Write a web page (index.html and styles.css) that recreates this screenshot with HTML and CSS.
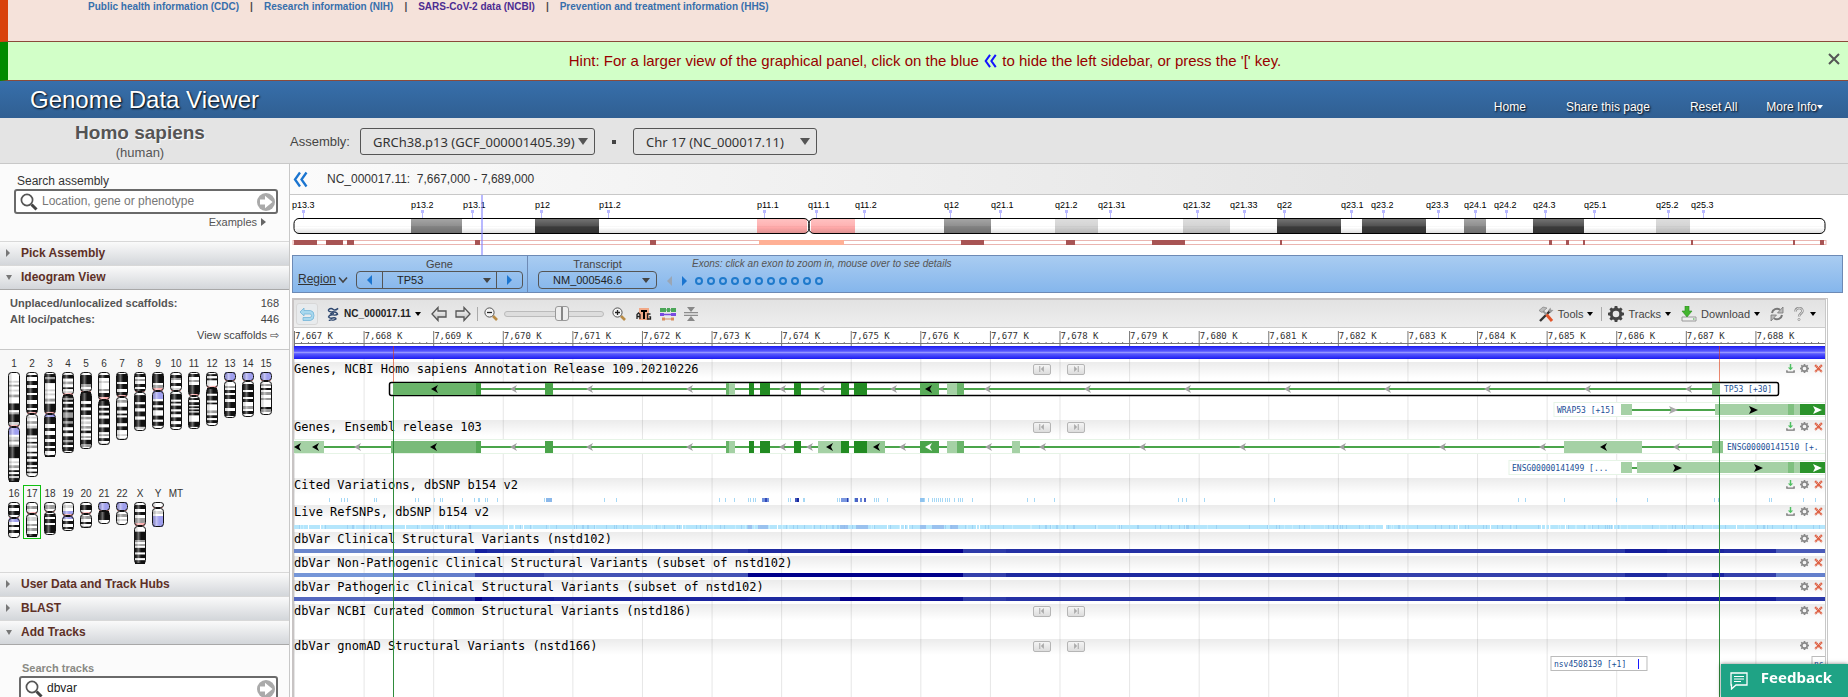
FILE: index.html
```html
<!DOCTYPE html>
<html lang="en">
<head>
<meta charset="utf-8">
<title>Genome Data Viewer</title>
<link rel="stylesheet" href="styles.css">
</head>
<body>
<svg class="defs" aria-hidden="true">
  <defs>
    <linearGradient id="shade" x1="0" x2="0" y1="0" y2="1"><stop offset="0" stop-color="#fff" stop-opacity=".3"/><stop offset=".5" stop-color="#fff" stop-opacity=".12"/><stop offset=".6" stop-color="#000" stop-opacity="0"/><stop offset="1" stop-color="#000" stop-opacity=".14"/></linearGradient>
    <linearGradient id="gloss" x1="0" x2="1" y1="0" y2="0"><stop offset="0" stop-color="#000" stop-opacity=".1"/><stop offset=".35" stop-color="#fff" stop-opacity=".4"/><stop offset=".6" stop-color="#fff" stop-opacity="0"/></linearGradient>
    <linearGradient id="metal" x1="0" x2="0" y1="0" y2="1"><stop offset="0" stop-color="#fff"/><stop offset="1" stop-color="#bbb"/></linearGradient>
    <symbol id="i-search" viewBox="0 0 18 18"><circle cx="7" cy="7" r="5.6" fill="#fff" stroke="#555" stroke-width="1.7"/><path d="M11.5 11.5l5 5" stroke="#444" stroke-width="3"/></symbol>
    <symbol id="i-go" viewBox="0 0 18 18"><circle cx="9" cy="9" r="9" fill="#aaa"/><path d="M3 6.500h5V2.800L15.500 9 8 15.200v-3.700H3z" fill="#fff"/></symbol>
    <symbol id="i-left2" viewBox="0 0 15 16"><path d="M7 1L2 8l5 7M13.500 1l-5 7 5 7" fill="none" stroke="currentColor" stroke-width="2.300"/></symbol>
    <symbol id="i-close" viewBox="0 0 12 12"><path d="M1 1l10 10M11 1L1 11" stroke="#555" stroke-width="2"/></symbol>
    <symbol id="i-gear" viewBox="0 0 16 16"><path d="M6.700 0h2.600l.4 2 1.400.6L12.800 1.400l1.800 1.800-1.200 1.700.6 1.400 2 .4v2.600l-2 .4-.6 1.400 1.200 1.700-1.800 1.800-1.700-1.200-1.400.6-.4 2H6.700l-.4-2-1.400-.6-1.700 1.200-1.800-1.800 1.200-1.700-.6-1.400-2-.4V6.700l2-.4.6-1.400L1.400 3.200l1.800-1.800 1.700 1.200L6.300 2zM8 4.700a3.300 3.300 0 100 6.600 3.300 3.300 0 000-6.600z" fill="currentColor" fill-rule="evenodd"/></symbol>
    <symbol id="i-save" viewBox="0 0 10 10"><path d="M1 7v2h8V7" fill="none" stroke="#777" stroke-width="1.500"/><path d="M4.200 0h1.600v4H8L5 7 2 4h2.200z" fill="#4fbf62"/></symbol>
    <symbol id="i-x" viewBox="0 0 8 8"><path d="M1 1l6 6M7 1L1 7" stroke="#dd5a3c" stroke-width="2" stroke-dasharray="1.300 .3"/></symbol>
    <symbol id="i-prev" viewBox="0 0 8 8"><path d="M1 0v8" stroke="#aaa" stroke-width="1.400"/><path d="M6.500 0v8L2.500 4z" fill="#aaa"/></symbol>
    <symbol id="i-next" viewBox="0 0 8 8"><path d="M7 0v8" stroke="#aaa" stroke-width="1.400"/><path d="M1.500 0v8l4-4z" fill="#aaa"/></symbol>
    <symbol id="i-undo" viewBox="0 0 16 16"><path d="M5 2L1 6l4 4V8h6q1.500 0 1.500 1.700T11 11.500H4v3h7.500q3.500-.5 3.500-5T11.500 4.500H5z" fill="#a8d8ee" stroke="#73b5d8" stroke-width=".8"/></symbol>
    <symbol id="i-dna" viewBox="0 0 14 15"><path d="M2 3q3-2.500 5-.5t5.500-1M2 3q0 2.500 4 2.200t6 2M12.300 7.200q-1.500 2-5 1.300T2 10.500M4 7.500q2-1.500 4-.5M2 10.500q1 2 4.500 1.300t4 .9M10.500 12.700q-2 1.800-4 1.300t-4 .5" fill="none" stroke="#2d466e" stroke-width="1.500"/></symbol>
    <symbol id="i-back" viewBox="0 0 16 16"><path d="M1 8l6-6.500V5h8v6H7v3.500z" fill="url(#metal)" stroke="#555" stroke-width="1.300"/></symbol>
    <symbol id="i-fwd" viewBox="0 0 16 16"><path d="M15 8L9 1.500V5H1v6h8v3.500z" fill="url(#metal)" stroke="#555" stroke-width="1.300"/></symbol>
    <symbol id="i-out" viewBox="0 0 14 14"><path d="M9 9l4 4" stroke="#b98b45" stroke-width="2.600"/><circle cx="5.500" cy="5.500" r="4.600" fill="#f4f4f4" stroke="#555"/><path d="M3 5.500h5" stroke="#222" stroke-width="1.300"/></symbol>
    <symbol id="i-in" viewBox="0 0 14 14"><path d="M9 9l4 4" stroke="#b98b45" stroke-width="2.600"/><circle cx="5.500" cy="5.500" r="4.600" fill="#f4f4f4" stroke="#555"/><path d="M3 5.500h5M5.500 3v5" stroke="#222" stroke-width="1.300"/></symbol>
    <symbol id="i-atg" viewBox="0 0 16 14"><path d="M3 1h10v12H3z" fill="#f2a987"/><path d="M1 12V7.500L2.500 6 4 7.500V12M1 9.500h3M14.500 7h-3v5h3V9.800h-1.300" fill="none" stroke="#222" stroke-width="1.300"/><path d="M5 4h6M8 4v8" stroke="#000" stroke-width="2"/></symbol>
    <symbol id="i-tracks" viewBox="0 0 16 14"><path d="M0 3h16" stroke="#4aa657" stroke-width="1"/><path d="M0 1h6v4H0zM7 1h3v4H7zM11 1h5v4h-5z" fill="#4aa657"/><path d="M1 7.500h14" stroke="#7a4be0" stroke-width="1.500"/><path d="M0 6h4v3H0zM11 6h5v3h-5z" fill="#7a4be0"/><path d="M3 12h10" stroke="#d98b5c"/><path d="M2 10.500h3v3H2zM11 10.500h3v3h-3z" fill="#d98b5c"/></symbol>
    <symbol id="i-fit" viewBox="0 0 14 14"><path d="M0 5.700h14M0 8.300h14" stroke="#777"/><path d="M3 0h8L7 5zM3 14h8L7 9z" fill="#888"/></symbol>
    <symbol id="i-tools" viewBox="0 0 16 16"><path d="M2 15L12 5" stroke="#333" stroke-width="2.400"/><path d="M10 4.500l2.500-3 .5 2.200 2.500.3-3 3z" fill="#999"/><path d="M4 4l5 5" stroke="#999" stroke-width="1.800"/><path d="M1 4.500L5 1l4 1-5 4.500z" fill="#bbb" stroke="#777" stroke-width=".6"/><path d="M8.500 8.500L14 15" stroke="#e2562b" stroke-width="3"/></symbol>
    <symbol id="i-dl" viewBox="0 0 16 16"><path d="M1 11h14v4H1z" fill="#eee" stroke="#999"/><path d="M12 13h1.500" stroke="#3a3"/><path d="M4 0h4v5h3L6 11 1 5h3z" fill="#43b52f" stroke="#2c8b1f" stroke-width=".6"/></symbol>
    <symbol id="i-refresh" viewBox="0 0 14 14"><path d="M2 6a5 5 0 018-3.200M12 8a5 5 0 01-8 3.200" fill="none" stroke="#777" stroke-width="2"/><path d="M13 0v6H7.500zM1 14V8h5.500z" fill="#bbb" stroke="#777" stroke-width=".8"/></symbol>
    <symbol id="i-help" viewBox="0 0 9 14"><path d="M1 4.500C1 0 8 0 8 4c0 2.500-3.500 2.500-3.500 5.500" fill="none" stroke="#888" stroke-width="2.400"/><path d="M1 4.500C1 0 8 0 8 4c0 2.500-3.500 2.500-3.500 5.500" fill="none" stroke="#f4f4f4" stroke-width=".9"/><circle cx="4.500" cy="12.500" r="1.100" fill="#f4f4f4" stroke="#888" stroke-width=".7"/></symbol>
    <symbol id="i-chat" viewBox="0 0 18 18"><path d="M1 1h16v12H6l-4.500 4V13H1z" fill="none" stroke="#fff" stroke-width="1.300"/><path d="M4 4.500h10M4 7h10M4 9.500h7" stroke="#fff"/></symbol>
  </defs>
</svg>

<div class="alert">
  <a href="#">Public health information (CDC)</a><span>|</span><a href="#">Research information (NIH)</a><span>|</span><a class="visited" href="#">SARS-CoV-2 data (NCBI)</a><span>|</span><a href="#">Prevention and treatment information (HHS)</a>
</div>
<div class="hint">
  <p>Hint: For a larger view of the graphical panel, click on the blue <svg><use href="#i-left2"/></svg> to hide the left sidebar, or press the '[' key.</p>
  <button class="plain close" aria-label="Close"><svg><use href="#i-close"/></svg></button>
</div>
<header class="title">
  <h1>Genome Data Viewer</h1>
  <nav><a href="#">Home</a><a href="#">Share this page</a><a href="#">Reset All</a><a class="more" href="#">More Info<i class="caret"></i></a></nav>
</header>
<div class="organism">
  <div class="species"><h2>Homo sapiens</h2><p>(human)</p></div>
  <label for="assembly">Assembly:</label>
  <span class="pick wide"><select id="assembly"><option>GRCh38.p13 (GCF_000001405.39)</option></select></span>
  <span class="dot"></span>
  <span class="pick"><select aria-label="Chromosome"><option>Chr 17 (NC_000017.11)</option></select></span>
</div>

<div class="work">
  <aside>
    <div class="find">
      <label for="q">Search assembly</label>
      <div class="box"><svg><use href="#i-search"/></svg><input id="q" type="text" placeholder="Location, gene or phenotype"><button class="plain" aria-label="Go"><svg><use href="#i-go"/></svg></button></div>
      <a class="examples" href="#">Examples<i></i></a>
    </div>
    <button class="fold">Pick Assembly</button>
    <button class="fold open">Ideogram View</button>
    <div class="counts">
      <dl><dt>Unplaced/unlocalized scaffolds:</dt><dd>168</dd><dt>Alt loci/patches:</dt><dd>446</dd></dl>
      <a href="#">View scaffolds ⇨</a>
    </div>
    <div class="karyo"><div class="chroms" id="row1"></div><div class="chroms" id="row2"></div></div>
    <button class="fold">User Data and Track Hubs</button>
    <button class="fold">BLAST</button>
    <button class="fold open">Add Tracks</button>
    <div class="find tracksearch">
      <label for="t">Search tracks</label>
      <div class="box"><svg><use href="#i-search"/></svg><input id="t" type="text" value="dbvar"><button class="plain" aria-label="Go"><svg><use href="#i-go"/></svg></button></div>
    </div>
  </aside>

  <main>
    <div class="location"><button class="plain" aria-label="Hide sidebar"><svg><use href="#i-left2"/></svg></button><span>NC_000017.11:&nbsp; 7,667,000 - 7,689,000</span></div>
    <svg class="ideogram" id="ideogram"></svg>

    <div class="region">
      <a class="regionlink" href="#">Region</a><svg class="chev" viewBox="0 0 10 8"><path d="M1 1.500l4 4.500 4-4.500" fill="none" stroke="#444" stroke-width="1.600"/></svg>
      <div class="group gene">
        <label for="gene">Gene</label>
        <div class="combo"><button class="plain" aria-label="Previous gene"><i class="tri back"></i></button><select id="gene"><option>TP53</option></select><button class="plain" aria-label="Next gene"><i class="tri"></i></button></div>
      </div>
      <div class="group transcript">
        <label for="tr">Transcript</label>
        <div class="combo"><select id="tr"><option>NM_000546.6</option></select></div>
      </div>
      <div class="exons">
        <p>Exons: click an exon to zoom in, mouse over to see details</p>
        <div id="exons"><i class="tri back off"></i><i class="tri"></i></div>
      </div>
    </div>

    <section class="viewer">
      <div class="toolbar">
        <button class="plain undo" aria-label="Undo"><svg class="s16"><use href="#i-undo"/></svg></button>
        <button class="plain seq"><svg class="s14"><use href="#i-dna"/></svg>NC_000017.11<i class="caret"></i></button>
        <button class="plain" aria-label="Pan left"><svg class="s16"><use href="#i-back"/></svg></button>
        <button class="plain" aria-label="Pan right"><svg class="s16"><use href="#i-fwd"/></svg></button>
        <span class="sep"></span>
        <button class="plain" aria-label="Zoom out"><svg class="s14"><use href="#i-out"/></svg></button>
        <input type="range" aria-label="Zoom" min="0" max="100" value="60">
        <button class="plain" aria-label="Zoom in"><svg class="s14"><use href="#i-in"/></svg></button>
        <button class="plain" aria-label="Sequence"><svg class="s16"><use href="#i-atg"/></svg></button>
        <button class="plain" aria-label="Track layout"><svg class="s16"><use href="#i-tracks"/></svg></button>
        <button class="plain" aria-label="Fit"><svg class="s14"><use href="#i-fit"/></svg></button>
        <span class="grow"></span>
        <button class="plain menu"><svg class="s16"><use href="#i-tools"/></svg>Tools<i class="caret"></i></button>
        <span class="sep"></span>
        <button class="plain menu"><svg class="s16 dark"><use href="#i-gear"/></svg>Tracks<i class="caret"></i></button>
        <button class="plain menu"><svg class="s16"><use href="#i-dl"/></svg>Download<i class="caret"></i></button>
        <button class="plain" aria-label="Refresh"><svg class="s14"><use href="#i-refresh"/></svg></button>
        <button class="plain menu" aria-label="Help"><svg class="s14"><use href="#i-help"/></svg><i class="caret"></i></button>
      </div>
      <svg class="ruler" id="ruler"></svg>
      <div class="tracks" id="tracks">
        <svg class="under" id="grid"></svg>
        <div class="sequence"></div>
      </div>
    </section>
  </main>
</div>
<button class="feedback"><svg><use href="#i-chat"/></svg>Feedback</button>
<script src="app.js"></script>
</body>
</html>
```
FILE: styles.css
```css
* { box-sizing: border-box; }
body { margin: 0; height: 100vh; overflow: hidden; display: flex; flex-direction: column; background: #fff; color: #333; font: 12px/16px "Liberation Sans", Arial, sans-serif; }
h1, h2, p, dl, dd { margin: 0; }
a { color: inherit; text-decoration: none; }
svg { display: block; flex: none; }
.defs { position: absolute; width: 0; height: 0; }
.plain { appearance: none; border: 0; padding: 0; margin: 0; background: none; font: inherit; color: inherit; display: flex; align-items: center; }
.caret { width: 0; height: 0; border: 3px solid transparent; border-top: 4px solid #000; border-bottom: 0; }
.s16 { width: 16px; height: 16px; }
.s14 { width: 14px; height: 14px; }

.alert { height: 42px; flex: none; padding-left: 80px; border-left: 8px solid #d9420b; border-bottom: 1px solid #8b4a3a; background: #f5e2da; font-size: 10px; line-height: 13px; font-weight: bold; color: #4a4a4a; display: flex; }
.alert a { color: #376fac; }
.alert .visited { color: #4c2c92; }
.alert span { margin: 0 11px; }
.hint { height: 39px; flex: none; display: flex; align-items: center; border-left: 8px solid #008a00; border-bottom: 1px solid #8b4a3a; background: #d2ffc8; color: #990000; font-size: 15px; }
.hint p { flex: 1; text-align: center; padding-left: 14px; }
.hint p svg { display: inline-block; width: 15px; height: 14px; color: #1414ff; vertical-align: -2px; }
.close { margin: 0 8px 4px 0; }
.close svg { width: 12px; height: 12px; }

.title { height: 37px; flex: none; display: flex; justify-content: space-between; align-items: center; padding: 0 25px 0 30px; background: linear-gradient(#376fab, #305f92); color: #fff; text-shadow: 1px 1px 2px #000; }
.title h1 { font-size: 24px; line-height: 28px; font-weight: normal; }
.title nav { display: flex; padding-top: 14px; }
.title nav a { margin-left: 40px; }
.title nav .more { margin-left: 29px; display: flex; align-items: center; }
.title .caret { border-top-color: #fff; }

.organism { height: 46px; flex: none; display: flex; align-items: center; border-bottom: 1px solid #c8c8c8; background: #e4e4e4; padding-top: 2px; font-size: 13px; color: #444; }
.species { width: 290px; padding-right: 10px; text-align: center; color: #555; }
.species h2 { font-size: 19px; line-height: 23px; text-shadow: 1px 1px 1px #fff; }
.species p { line-height: 18px; }
.organism label { margin-right: 10px; }
.pick { position: relative; width: 184px; }
.pick.wide { width: 235px; }
.pick select { appearance: none; display: block; width: 100%; height: 27px; padding: 0 12px; border: 1px solid #555; border-radius: 3px; background: #e4e4e4; color: #333; font: 13px "Noto Sans", sans-serif; }
.pick::after { content: ""; position: absolute; right: 7px; top: 10px; border: 5px solid transparent; border-top: 7px solid #555; border-bottom: 0; }
.dot { width: 4px; height: 4px; margin: 0 17px; background: #444; }

.work { flex: 1; min-height: 0; display: grid; grid-template-columns: 290px 1fr; overflow: hidden; }
aside { min-width: 0; border-right: 1px solid #c8c8c8; background: #fbfbfb; overflow: hidden; }
.find { height: 77px; padding: 9px 11px 0 14px; display: flex; flex-direction: column; }
.find label { padding-left: 3px; }
.box { height: 25px; flex: none; display: flex; align-items: center; padding: 0 1px 0 4px; border: 2px solid #6a6a6a; border-radius: 3px; background: #fff; }
.box svg { width: 18px; height: 18px; }
.box input { flex: 1; min-width: 0; border: 0; outline: 0; padding: 0 4px 2px; background: none; font: 12px "Liberation Sans", sans-serif; color: #222; }
.box input::placeholder { color: #777; }
.examples { align-self: flex-end; display: flex; align-items: center; margin-right: 12px; font-size: 11px; color: #555; }
.examples i { margin-left: 4px; border: 4px solid transparent; border-left: 5px solid #666; border-right: 0; }
.fold { display: flex; align-items: center; width: 100%; height: 24px; padding: 0 6px 1px; border: 0; border-top: 1px solid #d8d8d8; background: linear-gradient(#fafafa, #d3d6da); font: bold 12px "Liberation Sans", sans-serif; color: #5e3026; }
.fold::before { content: ""; margin-right: 11px; border: 4px solid transparent; border-left: 4px solid #777; border-right: 0; }
.fold.open::before { margin-right: 9px; border: 3px solid transparent; border-top: 5px solid #777; border-bottom: 0; }
.fold.open { height: 25px; border-bottom: 1px solid #a8a8a8; }
.counts { height: 60px; padding: 5px 10px; border-bottom: 1px solid #c8c8c8; font-size: 11px; color: #444; }
.counts dl { display: grid; grid-template-columns: 1fr auto; }
.counts dt { font-weight: bold; color: #555; }
.counts dd { text-align: right; }
.counts a { display: block; text-align: right; }
.karyo { height: 222px; padding: 5px 0 0 5px; background: #f8f8f8; }
.chroms { display: flex; height: 130px; }
.chrom { width: 18px; flex: none; display: flex; flex-direction: column; align-items: center; font-size: 10px; line-height: 16px; white-space: nowrap; border: 1px solid transparent; }
.chrom.on { height: 54px; border-color: #10c010; }
.tracksearch { padding: 15px 11px 0 19px; }
.tracksearch label { font-size: 11px; font-weight: bold; color: #8a8a84; }

main { min-width: 0; overflow: hidden; display: flex; flex-direction: column; }
.location { height: 31px; flex: none; display: flex; align-items: center; gap: 19px; padding: 0 3px; border-bottom: 1px solid #c8c8c8; background: linear-gradient(90deg, #fbfbfb, #e4e4e4 70%); }
.location svg { width: 15px; height: 17px; color: #1b75d0; }
.ideogram { height: 60px; margin: 0 23px 0 4px; width: calc(100% - 27px); overflow: visible; font: 9px "Liberation Sans", sans-serif; }
.region { height: 38px; flex: none; margin: 0 5px 0 2px; display: flex; border: 1px solid #6d8ab5; background: linear-gradient(#a9ccf1, #85b6ec); color: #444; font-size: 11px; }
.regionlink { padding: 15px 0 0 5px; font-size: 12px; text-decoration: underline; color: #333; }
.chev { width: 10px; height: 8px; margin: 20px 8px 0 2px; }
.group { display: flex; flex-direction: column; align-items: center; border-right: 1px solid #6d8ab5; padding: 2px 4px 0 0; }
.group label { line-height: 13px; }
.transcript { padding: 2px 10px 0; border: 0; }
.combo { position: relative; display: flex; height: 18px; border: 1px solid #555; border-radius: 4px; }
.combo button { width: 25px; justify-content: center; }
.combo select { appearance: none; width: 115px; padding: 0 14px; border: 0; border-left: 1px solid #555; border-right: 1px solid #555; background: none; font: 11px "Liberation Sans", sans-serif; color: #222; }
.transcript select { width: 117px; border: 0; }
.combo::after { content: ""; position: absolute; right: 31px; top: 6px; border: 4px solid transparent; border-top: 5px solid #444; border-bottom: 0; pointer-events: none; }
.transcript .combo::after { right: 6px; }
.tri { border: 5px solid transparent; border-left: 5px solid #1b75d0; border-right: 0; }
.tri.back { border-left: 0; border-right: 5px solid #1b75d0; }
.tri.off { border-right-color: #9aa6b5; }
.exons p { padding: 1px 0 0 25px; font-size: 10px; line-height: 14px; font-style: italic; color: #555; }
.exons div { display: flex; align-items: center; padding-top: 5px; }
.exons .tri.off { margin-right: 10px; }
.exons button { width: 8px; height: 8px; margin-left: 4px; padding: 0; border: 2px solid #1f7acc; border-radius: 4px; background: none; }
.exons .tri + button { margin-left: 8px; }

.viewer { flex: 1; min-height: 0; margin: 5px 20px 0 2px; border: 2px solid #c8c4c4; border-bottom: 0; border-right: 3px double #c8c8c8; display: flex; flex-direction: column; }
.toolbar { height: 28px; flex: none; display: flex; align-items: center; gap: 8px; padding: 0 7px 0 2px; border-bottom: 1px solid #ccc; background: linear-gradient(#e2e2e2, #eee); font-size: 11px; color: #444; }
.toolbar .undo { padding: 2px; border: 1px solid #d8d8d8; border-radius: 3px; background: #e8ebed; }
.toolbar .seq { gap: 4px; margin-right: 2px; font-size: 10px; font-weight: bold; color: #222; }
.toolbar .menu { gap: 4px; margin-right: 2px; }
.sep { width: 1px; height: 14px; margin: 0 -2px; background: #aaa; }
.grow { flex: 1; }
.dark { color: #444; }
.toolbar input { appearance: none; width: 100px; height: 6px; margin: 0 -2px; border: 1px solid #bbb; border-radius: 3px; background: #ddd; }
.toolbar input + button { margin-right: 2px; margin-left: 2px; }
.toolbar input::-webkit-slider-thumb { appearance: none; width: 14px; height: 15px; border: 1px solid #999; border-radius: 3px; background: linear-gradient(90deg, #eee 5px, #888 5px, #888 7px, #eee 7px); }
.ruler { width: 100%; height: 18px; font: 9px "DejaVu Sans Mono", monospace; overflow: hidden; }

.tracks { position: relative; flex: 1; min-height: 0; overflow: hidden; }
.under, .over { position: absolute; left: 0; top: 0; width: 100%; height: 100%; pointer-events: none; }
.sequence { position: relative; height: 13px; margin-bottom: 3px; background: linear-gradient(#1c1cf0, #5a5aff 40%, #9696ff 50%, #5a5aff 60%, #1c1cf0); }
.track { position: relative; }
.head { height: 16px; padding-bottom: 2px; display: grid; grid-template-columns: 1fr auto 1fr; align-items: center; background: linear-gradient(rgba(0,0,0,.08), rgba(0,0,0,0)); }
.head h3 { margin: 0; font: 12px/14px "DejaVu Sans Mono", monospace; color: #000; white-space: nowrap; }
.jump { display: flex; gap: 16px; padding-right: 2px; }
.jump button { width: 18px; height: 11px; justify-content: center; border: 1px solid #b5b5b5; border-radius: 2px; background: linear-gradient(#f4f4f4, #ddd); }
.jump svg { width: 8px; height: 6px; }
.acts { grid-column: 3; display: flex; justify-content: flex-end; gap: 5px; padding: 0 2px 2px 0; color: #888; }
.acts svg { width: 9px; height: 9px; }
.plot { width: 100%; font: 8px "DejaVu Sans Mono", monospace; overflow: hidden; }
.feedback { position: fixed; right: 0; bottom: 0; height: 33px; padding: 0 16px 8px 9px; display: flex; align-items: center; gap: 13px; border: 0; background: #1fa385; color: #fff; box-shadow: 0 0 4px rgba(0,0,0,.5); font: bold 15px "Noto Sans", sans-serif; }
.feedback svg { width: 18px; height: 18px; margin-top: 8px; }
```
FILE: app.js
```js
// Drawing units: the plotted range starts at 294 and spans 1531 units.
const START = 294, SPAN = 1531;
const X = x => ((x - START) / SPAN * 100).toFixed(3) + '%';
const W = w => (w / SPAN * 100).toFixed(3) + '%';
const rect = (a, b, y, h, fill, extra = '') => `<rect x="${X(a)}" width="${W(b - a)}" y="${y}" height="${h}" fill="${fill}" ${extra}/>`;
const text = (x, y, s, c) => `<text x="${X(x)}" y="${y}" fill="${c}">${s}</text>`;
const arrow = (x, y, c, right) => `<svg x="${X(x)}" y="${y}" width="9" height="8"><path d="${right ? 'M9 4L0 0l2 4-2 4z' : 'M0 4l7-4-2 4 2 4z'}" fill="${c}"/></svg>`;
const $ = id => document.getElementById(id);

// Chromosome ideogram
const FILL = { d: '#3a3a3a', g: '#808080', l: '#cfcfcf', p: '#ffa8a8' };
let s = rect(294, 809, 23.5, 15, '#fff', 'rx="5"') + rect(809, 1825, 23.5, 15, '#fff', 'rx="5"');
[[411,462,'g'],[535,599,'d'],[757,807,'p'],[811,855,'p'],[944,991,'g'],[1055,1098,'l'],[1183,1230,'l'],[1277,1341,'d'],[1362,1426,'d'],[1464,1486,'g'],[1533,1584,'d'],[1656,1690,'l']]
  .forEach(b => s += rect(b[0], b[1], 24, 14, FILL[b[2]]));
s += rect(294, 809, 23.5, 15, 'url(#shade)', 'stroke="#000" rx="5"') + rect(809, 1825, 23.5, 15, 'url(#shade)', 'stroke="#000" rx="5"');
[['p13.3',292,303],['p13.2',411,422],['p13.1',463,472],['p12',535,541],['p11.2',599,608],['p11.1',757,764],['q11.1',808,816],['q11.2',855,864],['q12',944,950],['q21.1',991,1000],['q21.2',1055,1066],['q21.31',1098,1110],['q21.32',1183,1197],['q21.33',1230,1244],['q22',1277,1284],['q23.1',1341,1351],['q23.2',1371,1383],['q23.3',1426,1438],['q24.1',1464,1475],['q24.2',1494,1506],['q24.3',1533,1545],['q25.1',1584,1594],['q25.2',1656,1668],['q25.3',1691,1703]]
  .forEach(([n, x, t]) => { s += text(x, 13, n, '#000') + rect(t - 1, t + 2, 15, 3, '#b8b8ff') + rect(t, t + 1, 15, 8, '#b8b8ff'); });
s += rect(293, 1826, 45.5, 4, '#fff', 'stroke="#eab5b0"') + rect(759, 844, 45, 5, '#ffb095');
[[294,317],[326,343],[347,354],[475,480],[650,656],[961,984],[1066,1075],[1152,1185],[1280,1282],[1549,1552],[1566,1569],[1583,1585],[1691,1693],[1793,1795],[1820,1824]]
  .forEach(b => s += rect(b[0], b[1], 45, 5, '#a85454'));
s += rect(481, 483, 0, 60, '#8080ff', 'opacity=".55"');
$('ideogram').innerHTML = s;

for (let i = 0; i < 11; i++) $('exons').insertAdjacentHTML('beforeend', `<button aria-label="Exon ${i + 1}"></button>`);

// Ruler and grid
let r = '<line x1="0" x2="100%" y1="15.500" y2="15.500" stroke="#777"/>', g = '';
const STEP = SPAN / 22;
for (let k = 0; k <= 22; k++) {
  const x = START + k * STEP;
  r += rect(x, x + 1, 3, 15, '#777');
  g += rect(x, x + 1, 13, 2000, '#e6e6e6');
  if (k < 22) {
    r += text(x + 1, 11, `7,${667 + k} K`, '#333');
    for (let j = 1; j < 10; j++) r += rect(x + j * STEP / 10, x + j * STEP / 10 + 1, 14, 1, '#777');
  }
}
$('ruler').innerHTML = r;
$('grid').innerHTML = g;

// Track contents
const L = '#a5d1a5', M = '#6ab46a', G = '#4aa44a', D = '#228b22', INK = '#1a4f96';
const common = y => [[545,553,G],[726,735,L],[726,729,M],[749,754,D],[760,770,D],[794,801,D],[841,849,D],[854,867,D],[947,957,L],[957,964,M]].map(b => rect(b[0], b[1], y, 12, b[2])).join('');
const arrows = (y, list, c) => list.map(x => arrow(x, y, c)).join('');
const tail = y => rect(1788, 1794, y, 11, '#7fc07f') + rect(1800, 1825, y, 11, '#2a932a') + arrow(1813, y + 2, '#fff', 1);

const ncbi =
  rect(389.5, 1778.5, 4.500, 13, '#fff', 'stroke="#000" stroke-width="1.500" rx="2"') + rect(481, 1712, 10, 2, G) +
  rect(393, 476, 5, 12, M) + rect(476, 481, 5, 12, '#3f9a3f') + common(5) + rect(920, 939, 5, 12, '#5aac5a') + rect(1712, 1720, 5, 12, '#7fc07f') +
  arrows(7, [431, 925], '#000') + arrows(7, [510,586,686,779,818,890,984,1084,1184,1284,1384,1484,1584,1685], '#a0a0a0') + text(1724, 14, 'TP53 [+30]', INK) +
  rect(1554, 1830, 24.500, 14, '#fff', 'stroke="#e6f4e6"') + text(1557, 35, 'WRAP53 [+15]', INK) + rect(1621, 1632, 26, 11, L) + rect(1632, 1715, 31, 2, G) + rect(1715, 1825, 26, 11, L) + arrow(1669, 28, '#aaa', 1) + arrow(1749, 28, '#000', 1) + tail(26);

const ensembl =
  rect(290, 1830, 3.500, 14, '#fff', 'stroke="#e6f4e6"') + rect(324, 1712, 10, 2, G) +
  rect(294, 324, 5, 12, L) + rect(391, 476, 5, 12, '#7abb7a') + rect(476, 481, 5, 12, '#55a855') + common(5) +
  [[818,841,L],[867,885,'#93c893'],[920,939,G],[1012,1020,L],[1564,1642,L],[1712,1723,'#8cc58c']].map(b => rect(b[0], b[1], 5, 12, b[2])).join('') +
  arrows(7, [294,312,430,826,873,1600], '#000') + arrows(7, [925], '#fff') + arrows(7, [354,510,586,686,779,806,899,985,1039,1139,1239,1339,1439,1539,1673], '#a0a0a0') + text(1727, 14, 'ENSG00000141510 [+.', INK) +
  rect(1509, 1830, 24.500, 14, '#fff', 'stroke="#e6f4e6"') + text(1512, 35, 'ENSG00000141499 [...', INK) + rect(1621, 1632, 26, 11, L) + rect(1632, 1637, 31, 2, G) + rect(1637, 1825, 26, 11, L) + arrow(1673, 28, '#000', 1) + arrow(1754, 28, '#000', 1) + tail(26);

let cited = '';
[329,341,344,347,374,376,415,418,434,440,442,462,474,478,479,485,487,497,544,546,548,550,604,616,719,725,734,748,750,753,755,788,790,803,804,837,839,854,874,876,878,887,920,922,924,928,932,934,936,938,940,942,945,947,949,954,958,960,962,972,1027,1034,1054,1178,1182,1186,1204,1274,1518,1525,1564,1616,1647,1714,1718,1769,1771,1803,1815]
  .forEach(x => cited += rect(x, x + 1, 4, 4, '#a6d8f5'));
[[546,552,'#8bb8ea'],[762,769,'#6f8fdc'],[765,767,'#3348b8'],[795,799,'#4056bb'],[797,799,'#1a2a9e'],[841,849,'#7b98e0'],[847,848,'#2a3cab'],[855,858,'#4d62c4'],[860,862,'#6f8fdc'],[864,866,'#4d62c4'],[920,924,'#8fc3ef']]
  .forEach(b => cited += rect(b[0], b[1], 4, 4, b[2]));

let snps = rect(294, 1825, 4, 4, '#b5e6fc');
for (let i = 0, v = 7; i < 240; i++) { v = (v * 137 + 71) % 1531; snps += rect(294 + v, 295 + v, 4, 4, i % 3 ? '#9ed2f4' : '#c8efff'); }
[[748,752],[758,768],[840,848],[856,868],[920,926],[932,944],[950,958]].forEach(b => snps += rect(b[0], b[1], 4, 4, '#8fb2ea', 'opacity=".7"'));
[308,320,405,444,508,514,523,682,777,887,900,904,908,976,979,1383,1384,1385,1458,1490,1541,1545,1549,1565,1613,1736].forEach(x => snps += rect(x, x + 1, 4, 4, '#fff'));

const runs = list => list.map((b, i) => rect(b[0], (list[i + 1] || [1825])[0], 1, 4, b[1])).join('');
const clin = runs([[294,'#6a86cc'],[393,'#5068bf'],[475,'#1520a0'],[487,'#1f2ca3'],[554,'#2c3aa8'],[748,'#1e2aa0'],[840,'#03008c'],[963,'#2e3ba9'],[1006,'#2430a4'],[1380,'#2b38a9'],[1625,'#141d9b'],[1667,'#1c259f'],[1724,'#222ca2'],[1776,'#4a5bb8']]);
const nonp = runs([[294,'#7596d8'],[393,'#637dcb'],[475,'#3440ac'],[544,'#4453b5'],[748,'#00008b'],[963,'#3440ac'],[1006,'#1e2aa0'],[1380,'#3440ac'],[1625,'#1e2aa0'],[1667,'#3440ac'],[1712,'#1a24a0'],[1724,'#3440ac'],[1776,'#6480cc']]);
const path = runs([[294,'#5468bf'],[393,'#3c4cb0'],[475,'#03008c'],[482,'#141d9b'],[554,'#1c259f'],[748,'#1e2aa0'],[840,'#03008c'],[880,'#0d1296'],[963,'#2e3ba9'],[1006,'#2430a4'],[1380,'#2b38a9'],[1625,'#141d9b'],[1776,'#2b38a9']]);
const nsv = rect(1551, 1647, 1.500, 14, '#fff', 'stroke="#bbb"') + text(1554, 12, 'nsv4508139 [+1]', INK) + rect(1638, 1639, 4, 10, '#1a1aff') +
  rect(1812, 1830, 1.500, 14, '#fff', 'stroke="#bbb"') + text(1814, 12, 'ns', INK);

[
  ['Genes, NCBI Homo sapiens Annotation Release 109.20210226', 42, ncbi, 1, 1],
  ['Genes, Ensembl release 103', 42, ensembl, 1, 1],
  ['Cited Variations, dbSNP b154 v2', 11, cited, 0, 1],
  ['Live RefSNPs, dbSNP b154 v2', 11, snps, 0, 1],
  ['dbVar Clinical Structural Variants (nstd102)', 8, clin],
  ['dbVar Non-Pathogenic Clinical Structural Variants (subset of nstd102)', 8, nonp],
  ['dbVar Pathogenic Clinical Structural Variants (subset of nstd102)', 8, path],
  ['dbVar NCBI Curated Common Structural Variants (nstd186)', 19, '', 1],
  ['dbVar gnomAD Structural Variants (nstd166)', 42, nsv, 1]
].forEach(([name, h, body, jump, save]) => {
  $('tracks').insertAdjacentHTML('beforeend', `<div class="track"><div class="head"><h3>${name}</h3>
    ${jump ? '<div class="jump"><button class="plain" aria-label="Previous"><svg><use href="#i-prev"/></svg></button><button class="plain" aria-label="Next"><svg><use href="#i-next"/></svg></button></div>' : ''}
    <div class="acts">${save ? '<svg><use href="#i-save"/></svg>' : ''}<svg><use href="#i-gear"/></svg><svg><use href="#i-x"/></svg></div></div>
    <svg class="plot" height="${h}">${body}</svg></div>`);
});
$('tracks').insertAdjacentHTML('beforeend', `<svg class="over">${[393, 1719].map(x => rect(x, x + 1, 0, 36, '#e03a10', 'opacity=".6"') + rect(x, x + 1, 50, 2000, '#2e8b3a')).join('')}</svg>`);

// Karyotype: each arm is a list of runs (colour letter, relative height) fitted to the arm's height
const BAND = { w: '#fff', k: '#111', d: '#444', g: '#999', l: '#d0d0d0', p: '#ffb0b0', b: '#a0a0ee' };
const draw = (arms, heights) => {
  let y = 0, out = '', clip = '';
  arms.forEach((arm, i) => {
    const top = y, list = arm.match(/[a-z]\d+/g).map(t => [t[0], +t.slice(1)]);
    const k = heights[i] / list.reduce((a, b) => a + b[1], 0);
    list.forEach(([c, h]) => { out += `<rect x="1" width="10" y="${y.toFixed(2)}" height="${(h * k).toFixed(2)}" fill="${BAND[c]}"/>`; y += h * k; });
    y = top + heights[i];
    clip += `<rect x=".5" y="${top + .5}" width="11" height="${heights[i] - 1}" rx="3"/>`;
  });
  return `<svg width="12" height="${y}">${out}<g fill="url(#gloss)" stroke="#111">${clip}</g></svg>`;
};
const ROWS = [
  [['1','w9l2w2g2w3l2w3g3w6k7w2g2k8l3p2','b8w2l3g2w3g2k12w3l2w2g3w2k2w2k2l2k4',55,55],
   ['2','w3k2w4k4w3k5w2k5w4k4w2k2p2','w3l2w3g3w2l3k8w2g2w3k2w2g3w4k2w3k3w3k4w2k2w3k2w4',42,63],
   ['3','w2k3g2k4w6l2w2l2w3g3w2k8p2','b3k7w4k3w4k4w3k4w2k3w4k2',42,43],
   ['4','w3k4w3g3w3k2w2l2p2','k3g2k2w2k4w2k3g5k4g2k4w3k3w3k4g2k3w2k4w2',23,58],
   ['5','w3k9g3w2g2p1','k10w3k4w3k5w2g3w2l3w2g3w2k3w3g2w2k5g3w2',20,57],
   ['6','w3k3w3l2w6g2w2k4p3','k6w2k3w2k3w3k6w3k5w2g2w2k3w2l2',28,45],
   ['7','w2k8w2k5w3k3p2','w3g3w4k4w3k2w2k6w3k4w4l2w2l2',25,43],
   ['8','w2k3w2g2w3k3w2k2p1','w3k7w2k4w3k5w3k7l2w2',20,39],
   ['9','w2k9w2g3p3','b8w2k4w2k3w5k4w2k4w3',19,38],
   ['10','w3k3g2w3k3w2l2p1','w3k6w2k2w2k4w2k3w3k4w3k3w3',19,39],
   ['11','w2k3w3g2w3k9p2','w2k2w2k3w1k2w1k2w1k3w6k5w2',24,33],
   ['12','w2k2w2k2w5p2','k6w2k5w2k2w6g3w2k3w2k3w3',16,38],
   ['13','b8p1','w5g2w2k3w2k4w3k6w3k5w2',9,37],
   ['14','b8p1','w3k6w2k5w2k3w4g3w2k3w3',9,36],
   ['15','b8p1','w3g2w2k2w2g3w3g2w7k2g3w3',9,34]],
  [['16','w3k3w3k4w2p1','b4w3k2w3k3w5',16,20],
   ['17','w4g3w3p2','w3l4w3g2w2g3w3k3',12,23],
   ['18','w3g4w2p1','w2k3w2k4w2k8w2',10,23],
   ['19','w3l3w3b3p2','b3w2k3w3k2w2',14,15],
   ['20','w3k5w2p2','w2g3w3k2w2g2',12,14],
   ['21','b8p1','k9w4',9,13],
   ['22','b8p1','w3g3w2l2w4',9,14],
   ['X','w3k4w3k3w3g5p3','w6k9g2w2g2w2k5w2k4w2k4',24,38],
   ['Y','w5p1','w3l3w2b11',6,19],
   ['MT']]
];
ROWS.forEach((row, i) => row.forEach(([n, p, q, hp, hq]) => {
  $('row' + (i + 1)).insertAdjacentHTML('beforeend', `<div class="chrom${n === '17' ? ' on' : ''}">${n}${p ? draw([p, q], [hp, hq]) : ''}</div>`);
}));
```
